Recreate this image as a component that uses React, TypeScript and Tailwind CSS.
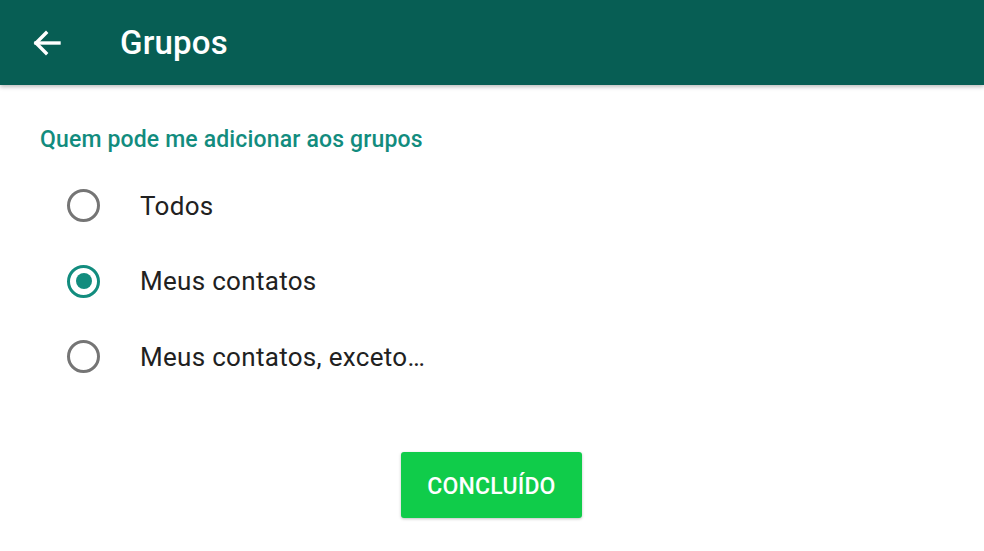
import React from "react";

function Radio({ checked }: { checked?: boolean }) {
  return (
    <div
      className={
        "flex h-[33px] w-[33px] shrink-0 items-center justify-center rounded-full border-[3px] " +
        (checked ? "border-[#128c7e]" : "border-[#757575]")
      }
    >
      {checked && <div className="h-[16px] w-[16px] rounded-full bg-[#128c7e]" />}
    </div>
  );
}

const options = [
  { label: "Todos", checked: false },
  { label: "Meus contatos", checked: true },
  { label: "Meus contatos, exceto…", checked: false },
];

export default function App() {
  return (
    <div className="flex h-[551px] w-[984px] flex-col bg-white" style={{ fontFamily: "Roboto, 'Noto Sans', sans-serif" }}>
      <header className="relative z-10 flex h-[85px] shrink-0 items-center bg-[#075e54] shadow-[0_2px_4px_rgba(0,0,0,0.25)]">
        <div className="ml-[33px] flex h-[26px] w-[28px] items-center">
          <svg width="28" height="26" viewBox="0 0 28 26" fill="none" stroke="white" strokeWidth="3.4" strokeLinecap="square">
            <path d="M3 13 H26" />
            <path d="M13 3 L3 13 L13 23" strokeLinejoin="miter" />
          </svg>
        </div>
        <h1 className="ml-[59px] text-[33px] font-medium leading-none tracking-[0.2px] text-white">Grupos</h1>
      </header>
      <main className="flex flex-1 flex-col">
        <div className="pl-[40px] pt-[42px] text-[23px] font-medium leading-[26px] tracking-[0.15px] text-[#128c7e]">
          Quem pode me adicionar aos grupos
        </div>
        <div className="mt-[36px] flex flex-col gap-[42.5px] pl-[67px]">
          {options.map((o) => (
            <div key={o.label} className="flex h-[33px] items-center">
              <Radio checked={o.checked} />
              <span className="ml-[40px] text-[26px] leading-none tracking-[0.3px] text-[#212121]">{o.label}</span>
            </div>
          ))}
        </div>
        <div className="mt-[79px] flex justify-center">
          <button className="ml-[-1px] h-[66px] w-[181px] rounded-[3px] bg-[#10cc4a] pt-[4px] text-[23px] font-medium tracking-[0.2px] text-white shadow-[0_1px_3px_rgba(0,0,0,0.25)]">
            CONCLUÍDO
          </button>
        </div>
      </main>
    </div>
  );
}
